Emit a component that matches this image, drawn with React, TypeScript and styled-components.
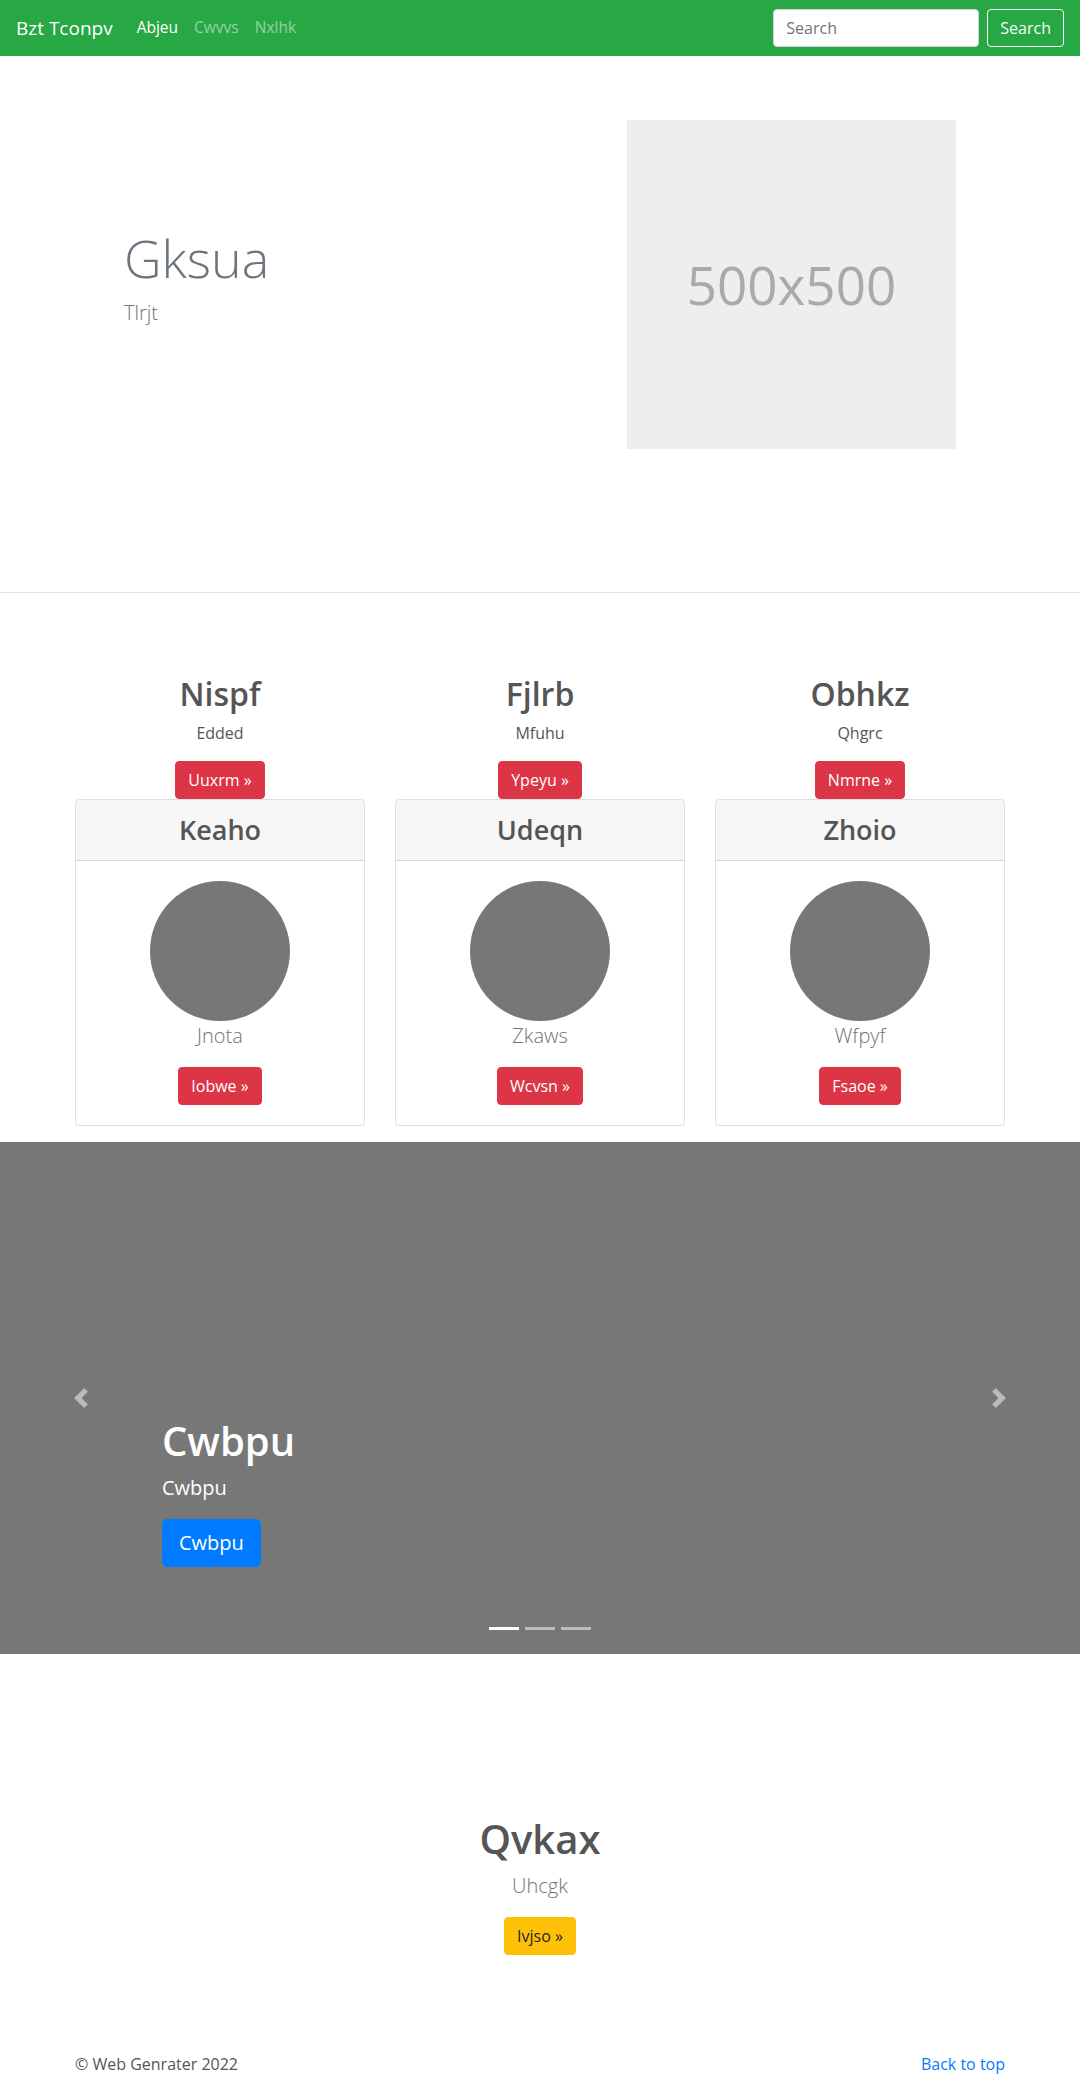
import * as React from "react";
import styled, {createGlobalStyle} from "styled-components";

const GlobalStyle = createGlobalStyle`
  body {
    margin: 0;
    font-family: "Open Sans", "Noto Sans", "Liberation Sans", sans-serif;
    font-size: 16px;
    line-height: 1.5;
    color: #212529;
    background: #fff;
  }
  * { box-sizing: border-box; }
`;

const Navbar = styled.nav`
  display: flex;
  align-items: center;
  height: 56px;
  padding: 8px 16px;
  background: #28a745;
`;

const Brand = styled.a`
  font-size: 19px;
  line-height: 30px;
  color: #fff;
  margin-right: 16px;
`;

const NavLinks = styled.div`
  display: flex;
  flex: 1;
`;

const NavLink = styled.a<{ active?: boolean }>`
  padding: 8px;
  font-size: 15.5px;
  color: ${props => props.active ? "#fff" : "rgba(255, 255, 255, 0.5)"};
`;

const SearchForm = styled.form`
  display: flex;
  align-items: center;
`;

const SearchInput = styled.input`
  width: 206px;
  height: 38px;
  padding: 6px 12px;
  margin-right: 8px;
  font: inherit;
  color: #495057;
  border: 1px solid #ced4da;
  border-radius: 4px;
  &::placeholder { color: #6c757d; }
`;

const Button = styled.button<{ variant: "red" | "blue" | "yellow" | "outline"; large?: boolean }>`
  font-family: inherit;
  font-size: ${props => props.large ? "20px" : "16px"};
  line-height: 1.5;
  padding: ${props => props.large ? "8px 16px" : "6px 12px"};
  border-radius: ${props => props.large ? "5px" : "4px"};
  border: 1px solid transparent;
  cursor: pointer;
  ${props => props.variant === "red" && "background: #dc3545; border-color: #dc3545; color: #fff;"}
  ${props => props.variant === "blue" && "background: #007bff; border-color: #007bff; color: #fff;"}
  ${props => props.variant === "yellow" && "background: #ffc107; border-color: #ffc107; color: #212529;"}
  ${props => props.variant === "outline" && "background: transparent; border-color: #f8f9fa; color: #f8f9fa;"}
`;

const Hero = styled.section`
  padding: 64px 0 143px;
  border-bottom: 1px solid #e5e5e5;
`;

const HeroRow = styled.div`
  width: 960px;
  margin: 0 auto;
  display: flex;
  align-items: center;
`;

const HeroText = styled.div`
  flex: 1;
  padding-left: 64px;
`;

const DisplayTitle = styled.h1`
  margin: 0 0 8px;
  font-size: 52px;
  font-weight: 300;
  line-height: 64px;
  color: #6c757d;
`;

const Lead = styled.p<{ muted?: boolean }>`
  margin: 0 0 16px;
  font-size: 20px;
  font-weight: 300;
  line-height: 1.5;
  color: ${props => props.muted ? "#6c757d" : "#555"};
`;

const Placeholder = styled.div`
  width: 329px;
  height: 329px;
  margin-right: 64px;
  background: #eee;
  color: #aaa;
  font-size: 53px;
  display: flex;
  align-items: center;
  justify-content: center;
`;

const Features = styled.section`
  padding-top: 82px;
`;

const FeatureGrid = styled.div`
  width: 930px;
  margin: 0 auto;
  display: grid;
  grid-template-columns: repeat(3, 1fr);
  column-gap: 30px;
  text-align: center;
`;

const Column = styled.div`
  display: flex;
  flex-direction: column;
  align-items: center;
`;

const FeatureTitle = styled.h2`
  margin: 0 0 8px;
  font-size: 32px;
  font-weight: 600;
  line-height: 1.2;
  color: #555;
`;

const Text = styled.p`
  margin: 0 0 16px;
  color: #555;
`;

const Card = styled.div`
  align-self: stretch;
  border: 1px solid rgba(0, 0, 0, 0.125);
  border-radius: 4px;
  overflow: hidden;
`;

const CardHeader = styled.div`
  padding: 13px 20px;
  background: rgba(0, 0, 0, 0.03);
  border-bottom: 1px solid rgba(0, 0, 0, 0.125);
`;

const CardTitle = styled.h3`
  margin: 0;
  font-size: 27px;
  font-weight: 600;
  line-height: 34px;
  color: #555;
`;

const CardBody = styled.div`
  padding: 20px;
  display: flex;
  flex-direction: column;
  align-items: center;
`;

const Avatar = styled.div`
  width: 140px;
  height: 140px;
  border-radius: 50%;
  background: #777;
`;

const Carousel = styled.section`
  position: relative;
  margin-top: 16px;
  height: 512px;
  background: #777;
  display: grid;
  grid-template-columns: 15% 1fr 15%;
`;

const Control = styled.div`
  display: flex;
  align-items: center;
  justify-content: center;
  opacity: 0.5;
`;

const Caption = styled.div`
  align-self: end;
  padding-bottom: 87px;
  color: #fff;
`;

const CaptionTitle = styled.h1`
  margin: 0 0 8px;
  font-size: 40px;
  font-weight: 600;
  line-height: 1.2;
`;

const CaptionText = styled.p`
  margin: 0 0 16px;
  font-size: 20px;
  line-height: 1.5;
`;

const Indicators = styled.ol`
  position: absolute;
  left: 0;
  right: 0;
  bottom: 24px;
  margin: 0;
  padding: 0;
  list-style: none;
  display: flex;
  justify-content: center;
`;

const Indicator = styled.li<{ active?: boolean }>`
  width: 30px;
  height: 3px;
  margin: 0 3px;
  background: #fff;
  opacity: ${props => props.active ? 1 : 0.5};
`;

const Closing = styled.section`
  padding: 161px 0 48px;
  text-align: center;
`;

const ClosingTitle = styled.h1`
  margin: 0 0 8px;
  font-size: 40px;
  font-weight: 600;
  line-height: 1.2;
  color: #555;
`;

const Footer = styled.footer`
  width: 930px;
  margin: 0 auto;
  padding-top: 49px;
  display: flex;
  justify-content: space-between;
  color: #555;
`;

const TopLink = styled.a`
  color: #007bff;
`;

const Chevron: React.FC<{ dir: "left" | "right" }> = ({dir}) => (
  <svg width="20" height="20" viewBox="0 0 8 8" fill="#fff">
    <path d={dir === "left" ? "M5.25 0l-4 4 4 4 1.5-1.5L4.25 4l2.5-2.5L5.25 0z" : "M2.75 0l-1.5 1.5L3.75 4l-2.5 2.5L2.75 8l4-4-4-4z"}/>
  </svg>
);

const features = [
  {title: "Nispf", text: "Edded", action: "Uuxrm", card: "Keaho", name: "Jnota", button: "Iobwe"},
  {title: "Fjlrb", text: "Mfuhu", action: "Ypeyu", card: "Udeqn", name: "Zkaws", button: "Wcvsn"},
  {title: "Obhkz", text: "Qhgrc", action: "Nmrne", card: "Zhoio", name: "Wfpyf", button: "Fsaoe"},
];

export default function App() {
  return (
    <>
      <GlobalStyle/>
      <Navbar>
        <Brand>Bzt Tconpv</Brand>
        <NavLinks>
          <NavLink active>Abjeu</NavLink>
          <NavLink>Cwvvs</NavLink>
          <NavLink>Nxlhk</NavLink>
        </NavLinks>
        <SearchForm onSubmit={e => e.preventDefault()}>
          <SearchInput placeholder="Search"/>
          <Button variant="outline">Search</Button>
        </SearchForm>
      </Navbar>

      <Hero>
        <HeroRow>
          <HeroText>
            <DisplayTitle>Gksua</DisplayTitle>
            <Lead muted>Tlrjt</Lead>
          </HeroText>
          <Placeholder>500x500</Placeholder>
        </HeroRow>
      </Hero>

      <Features>
        <FeatureGrid>
          {features.map(f =>
            <Column key={f.title}>
              <FeatureTitle>{f.title}</FeatureTitle>
              <Text>{f.text}</Text>
              <Button variant="red">{f.action} &raquo;</Button>
              <Card>
                <CardHeader>
                  <CardTitle>{f.card}</CardTitle>
                </CardHeader>
                <CardBody>
                  <Avatar/>
                  <Lead muted>{f.name}</Lead>
                  <Button variant="red">{f.button} &raquo;</Button>
                </CardBody>
              </Card>
            </Column>
          )}
        </FeatureGrid>
      </Features>

      <Carousel>
        <Control><Chevron dir="left"/></Control>
        <Caption>
          <CaptionTitle>Cwbpu</CaptionTitle>
          <CaptionText>Cwbpu</CaptionText>
          <Button variant="blue" large>Cwbpu</Button>
        </Caption>
        <Control><Chevron dir="right"/></Control>
        <Indicators>
          <Indicator active/>
          <Indicator/>
          <Indicator/>
        </Indicators>
      </Carousel>

      <Closing>
        <ClosingTitle>Qvkax</ClosingTitle>
        <Lead muted>Uhcgk</Lead>
        <Button variant="yellow">Ivjso &raquo;</Button>
      </Closing>

      <Footer>
        <span>&copy; Web Genrater 2022</span>
        <TopLink>Back to top</TopLink>
      </Footer>
    </>
  );
}
